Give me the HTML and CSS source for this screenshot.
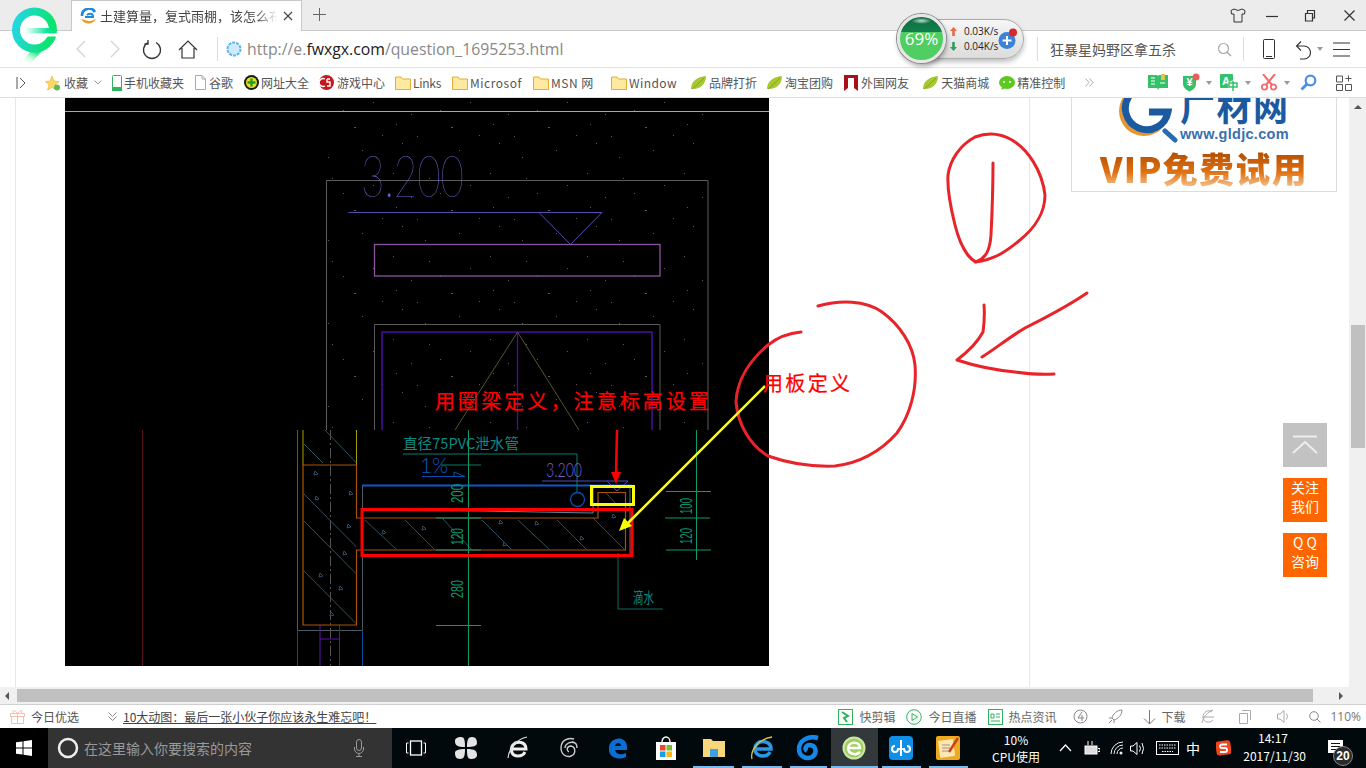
FILE: index.html
```html
<!DOCTYPE html>
<html lang="zh-CN">
<head>
<meta charset="utf-8">
<title>土建算量，复式雨棚，该怎么布置</title>
<link rel="stylesheet" href="styles.css">
</head>
<body>
<header class="tabstrip">
  <svg class="brand" width="50" height="64" viewBox="8 2 50 64">
    <defs>
      <linearGradient id="bg" x1="0" x2="1" y1="0" y2="0.2"><stop offset="0" stop-color="#25d6e6"/><stop offset="1" stop-color="#0be46e"/></linearGradient>
      <linearGradient id="bar" x1="0" x2="1"><stop offset="0" stop-color="#fff"/><stop offset="0.75" stop-color="#0be49a"/><stop offset="1" stop-color="#0be46e"/></linearGradient>
      <linearGradient id="tail" x1="0.8" x2="0.1" y1="0" y2="1"><stop offset="0" stop-color="#0be46e"/><stop offset="0.55" stop-color="#3fe88a"/><stop offset="1" stop-color="#fff" stop-opacity="0.2"/></linearGradient>
    </defs>
    <path d="M52 40 L32 62 L21 62 L34 48 Z" fill="url(#tail)"/>
    <path d="M17 43 Q24 50 31 51 L36 46 L22 38 Z" fill="#37c8f2"/>
    <circle cx="34.5" cy="30" r="18.5" fill="#fff" stroke="url(#bg)" stroke-width="8"/>
    <rect x="25" y="28" width="30" height="5.5" fill="url(#bar)"/>
    <rect x="46" y="33.500" width="12" height="3" fill="#fff"/>
  </svg>
  <div class="tab">
    <svg class="tab-fav" width="17" height="17" viewBox="0 0 17 17"><path d="M2 8 A7 7 0 0 1 15 4" fill="none" stroke="#1e88d8" stroke-width="2.600"/><path d="M5 9 H13 C13 5 9 5 7 7" fill="none" stroke="#1e88d8" stroke-width="2"/><path d="M1 11 C5 17 12 17 16 11 C12 13 8 14 5 12 Z" fill="#f39a1e"/></svg>
    <span class="tab-title">土建算量，复式雨棚，该怎么布置</span>
    <svg class="tab-x" width="10" height="10" viewBox="0 0 10 10"><path d="M1 1 L9 9 M9 1 L1 9" stroke="#444" stroke-width="1.200"/></svg>
  </div>
  <svg class="tab-plus" width="15" height="15" viewBox="0 0 15 15"><path d="M7.500 1 V14 M1 7.500 H14" stroke="#666" stroke-width="1"/></svg>
  <div class="winctrls">
    <svg width="16" height="15" viewBox="0 0 16 15"><path d="M4 1 L1 2.500 L1.500 6 L4 6 V14 H12 V6 L14.500 6 L15 2.500 L12 1 Q8 4 4 1 Z" fill="none" stroke="#333"/></svg>
    <svg width="14" height="15" viewBox="0 0 14 15"><path d="M1 8.500 H13" stroke="#333" stroke-width="1.200"/></svg>
    <svg width="12" height="15" viewBox="0 0 12 15"><path d="M1.500 5.500 H8.500 V13 H1.500 Z M3.500 5 V2.500 H10.500 V10 H9" fill="none" stroke="#333" stroke-width="1.200"/></svg>
    <svg width="13" height="15" viewBox="0 0 13 15"><path d="M1.500 2.500 L11.500 12.500 M11.500 2.500 L1.500 12.500" stroke="#333" stroke-width="1.200"/></svg>
  </div>
</header>

<nav class="addrbar">
  <svg class="nav-ico" width="12" height="18" viewBox="0 0 12 18"><path d="M10 1 L2 9 L10 17" fill="none" stroke="#d2d2d2" stroke-width="1.200"/></svg>
  <svg class="nav-ico fwd" width="12" height="18" viewBox="0 0 12 18"><path d="M2 1 L10 9 L2 17" fill="none" stroke="#d2d2d2" stroke-width="1.200"/></svg>
  <svg class="nav-ico reload" width="20" height="21" viewBox="0 0 20 21"><path d="M6 3.500 A8.500 8.500 0 1 0 14 3.500" fill="none" stroke="#333" stroke-width="1.300"/><path d="M6 1 V5 H2.500" fill="none" stroke="#333" stroke-width="1.300"/></svg>
  <svg class="nav-ico home" width="20" height="19" viewBox="0 0 20 19"><path d="M1 10 L10 1 L19 10 M4 8 V18 H16 V8" fill="none" stroke="#333" stroke-width="1.200"/></svg>
  <span class="vrule first"></span>
  <svg class="globe" width="16" height="16" viewBox="0 0 16 16"><circle cx="8" cy="8" r="6.500" fill="#cfeafc" stroke="#5fb5ee" stroke-width="2" stroke-dasharray="3 1"/></svg>
  <span class="url">http://e.<b>fwxgx.com</b>/question_1695253.html</span>
  <span class="vrule second"></span>
  <span class="hot">狂暴星妈野区拿五杀</span>
  <svg class="nav-ico lens" width="15" height="15" viewBox="0 0 15 15"><circle cx="6.500" cy="6.500" r="5" fill="none" stroke="#aaa" stroke-width="1.200"/><path d="M10 10 L14 14" stroke="#aaa" stroke-width="1.400"/></svg>
  <span class="vrule third"></span>
  <svg class="nav-ico phone" width="12" height="20" viewBox="0 0 12 20"><rect x="0.500" y="0.500" width="11" height="19" rx="1" fill="none" stroke="#333"/><path d="M3 17.500 H9" stroke="#333"/></svg>
  <svg class="nav-ico undo" width="16" height="21" viewBox="0 0 16 21"><path d="M2 7 H9 A6.500 6.500 0 0 1 9 20 H5 M6 2.500 L1.500 7 L6 11.500" fill="none" stroke="#333" stroke-width="1.100"/></svg>
  <span class="caret"></span>
  <svg class="nav-ico menu" width="17" height="15" viewBox="0 0 17 15"><path d="M0 1 H17 M0 7.500 H17 M0 14 H17" stroke="#333" stroke-width="1.200"/></svg>
</nav>

<aside class="speed">
  <div class="orb"><span class="orb-val">69%</span></div>
  <div class="pill">
    <div class="rates">
      <div class="rate"><svg width="7" height="9" viewBox="0 0 7 9"><path d="M3.500 0 L7 4 H4.800 V9 H2.200 V4 H0 Z" fill="#e8684a"/></svg><span>0.03K/s</span></div>
      <div class="rate"><svg width="7" height="9" viewBox="0 0 7 9"><path d="M3.500 9 L7 5 H4.800 V0 H2.200 V5 H0 Z" fill="#2f9e5a"/></svg><span>0.04K/s</span></div>
    </div>
    <div class="boost">
      <svg width="20" height="22" viewBox="0 0 20 22"><circle cx="9" cy="12.500" r="8.500" fill="#3b82d8"/><path d="M9 8 V17 M4.500 12.500 H13.500" stroke="#fff" stroke-width="2"/><circle cx="15" cy="4.500" r="4" fill="#d8282c"/></svg>
    </div>
  </div>
</aside>

<nav class="bookmarks">
  <svg class="bm-toggle" width="10" height="12" viewBox="0 0 10 12"><path d="M1 0 V12 M4 1 L9 6 L4 11" fill="none" stroke="#555"/></svg>
  <div class="bm bm-fav"><svg width="15" height="16" viewBox="0 0 15 16"><path d="M7 1 L9 6 L14 6.500 L10 10 L11.500 15 L7 12.500 L2.500 15 L4 10 L0.500 6.500 L5 6 Z" fill="#ffd75e" stroke="#e0b040" stroke-width="0.600"/><circle cx="12" cy="12.500" r="3" fill="#5dbb55"/></svg><span>收藏</span></div>
  <svg class="bm-chev" width="8" height="5" viewBox="0 0 8 5"><path d="M0.500 0.500 L4 4 L7.500 0.500" fill="none" stroke="#999"/></svg>
  <div class="bm m10 tight"><svg width="10" height="16" viewBox="0 0 10 16"><rect x="0.500" y="0.500" width="9" height="15" rx="1" fill="#fff" stroke="#2fb45f"/><rect x="0" y="12" width="10" height="4" fill="#2fb45f"/></svg><span>手机收藏夹</span></div>
  <div class="bm m11"><svg width="11" height="15" viewBox="0 0 11 15"><path d="M0.500 0.500 H7 L10.500 4 V14.500 H0.500 Z" fill="#fff" stroke="#aaa"/><path d="M7 .5 V4 H10.500" fill="none" stroke="#aaa"/></svg><span>谷歌</span></div>
  <div class="bm m11 tight"><svg width="15" height="15" viewBox="0 0 15 15"><circle cx="7.500" cy="7.500" r="7.500" fill="#1a1a1a"/><circle cx="7.500" cy="7.500" r="5.500" fill="#e4e21a"/><path d="M7.500 3.500 V11.500 M3.500 7.500 H11.500" stroke="#2a9a30" stroke-width="2.400"/></svg><span>网址大全</span></div>
  <div class="bm m10"><svg width="15" height="15" viewBox="0 0 15 15"><circle cx="7.500" cy="7.500" r="7.500" fill="#c8161d"/><path d="M6 4 A4 4 0 1 0 6 11 M8 4 H11 M8 4 V7 H11 V11 H8" fill="none" stroke="#fff" stroke-width="1.400"/></svg><span>游戏中心</span></div>
  <div class="bm m10 tight"><svg width="16" height="14" viewBox="0 0 16 14"><path d="M0.500 1 H6 L7.500 3 H15.500 V13.500 H0.500 Z" fill="#ffe9a0" stroke="#e0b030"/></svg><span class="w28">Links</span></div>
  <div class="bm m11 tight"><svg width="16" height="14" viewBox="0 0 16 14"><path d="M0.500 1 H6 L7.500 3 H15.500 V13.500 H0.500 Z" fill="#ffe9a0" stroke="#e0b030"/></svg><span class="w52">Microsof</span></div>
  <div class="bm m11 tight"><svg width="16" height="14" viewBox="0 0 16 14"><path d="M0.500 1 H6 L7.500 3 H15.500 V13.500 H0.500 Z" fill="#ffe9a0" stroke="#e0b030"/></svg><span class="w45">MSN 网</span></div>
  <div class="bm m15 tight"><svg width="16" height="14" viewBox="0 0 16 14"><path d="M0.500 1 H6 L7.500 3 H15.500 V13.500 H0.500 Z" fill="#ffe9a0" stroke="#e0b030"/></svg><span class="w48">Window</span></div>
  <div class="bm m14"><svg width="15" height="14" viewBox="0 0 15 14"><path d="M0 13 C0 5 6 1 15 0 C15 8 9 14 0 13 Z" fill="#a8c832"/><path d="M1 13 C5 10 9 6 13 2" fill="none" stroke="#7a9c1e" stroke-width="0.800"/></svg><span>品牌打折</span></div>
  <div class="bm m10"><svg width="15" height="14" viewBox="0 0 15 14"><path d="M0 13 C0 5 6 1 15 0 C15 8 9 14 0 13 Z" fill="#a8c832"/><path d="M1 13 C5 10 9 6 13 2" fill="none" stroke="#7a9c1e" stroke-width="0.800"/></svg><span>淘宝团购</span></div>
  <div class="bm m11"><svg width="14" height="16" viewBox="0 0 14 16"><path d="M0 0 H14 V16 L10 13 V3 H4 V13 L0 16 Z" fill="#a8101c"/></svg><span>外国网友</span></div>
  <div class="bm m14"><svg width="15" height="14" viewBox="0 0 15 14"><path d="M0 13 C0 5 6 1 15 0 C15 8 9 14 0 13 Z" fill="#a8c832"/><path d="M1 13 C5 10 9 6 13 2" fill="none" stroke="#7a9c1e" stroke-width="0.800"/></svg><span>天猫商城</span></div>
  <div class="bm m10 tight"><svg width="16" height="14" viewBox="0 0 16 14"><ellipse cx="8" cy="6.500" rx="8" ry="6.500" fill="#5fc820"/><path d="M3 11 L2.500 14 L6 12 Z" fill="#5fc820"/><circle cx="5" cy="6" r="1" fill="#fff"/><circle cx="11" cy="6" r="1" fill="#fff"/></svg><span>精准控制</span></div>
  <svg class="bm-more" width="9" height="9" viewBox="0 0 9 9"><path d="M0.500 0.500 L4 4.500 L0.500 8.500 M4.500 0.500 L8 4.500 L4.500 8.500" fill="none" stroke="#aaa"/></svg>
  <div class="bm-tools">
    <svg class="tool-book" width="20" height="17" viewBox="0 0 20 17"><path d="M0 1 H9 L10 2 L11 1 H20 V14 H11 L10 16 L9 14 H0 Z" fill="#35c16a"/><rect x="13" y="0" width="4" height="6" fill="#e3c34a"/><path d="M3 4 H7 M3 7 H7 M3 10 H7 M12 9 H17" stroke="#fff"/></svg>
    <svg class="tool-shield" width="20" height="19" viewBox="0 0 20 19"><path d="M1 3 H14 V11 Q14 16 7.500 18.500 Q1 16 1 11 Z" fill="#35c16a"/><text class="tool-yen" x="7.500" y="13" text-anchor="middle">¥</text><circle cx="14" cy="4" r="3.500" fill="#ee5a5a"/></svg>
    <span class="caret c4"></span>
    <svg class="tool-trans" width="20" height="19" viewBox="0 0 20 19"><rect x="0" y="1" width="13" height="14" rx="1" fill="#35c16a"/><text class="tool-a" x="2" y="12">A</text><circle cx="13" cy="12.500" r="5" fill="#fff"/><path d="M9 10 H17 V14 H9 Z M13 8 V18" fill="none" stroke="#35c16a" stroke-width="1.500"/></svg>
    <span class="caret c5"></span>
    <svg class="tool-cut" width="16" height="17" viewBox="0 0 16 17"><path d="M2 0 L11 11 M14 0 L5 11" stroke="#f46a6a" stroke-width="2"/><circle cx="3.500" cy="13" r="2.700" fill="none" stroke="#f46a6a" stroke-width="1.800"/><circle cx="12.500" cy="13" r="2.700" fill="none" stroke="#f46a6a" stroke-width="1.800"/></svg>
    <span class="caret c7"></span>
    <svg class="tool-key" width="17" height="17" viewBox="0 0 17 17"><circle cx="10.500" cy="6.500" r="4.800" fill="none" stroke="#4a8eea" stroke-width="2.200"/><path d="M7 10 L1.500 15.500" stroke="#4a8eea" stroke-width="2.800"/></svg>
    <svg class="tool-apps" width="16" height="16" viewBox="0 0 16 16"><path d="M0.500 1 H6.500 V7 H0.500 Z M0.500 9.500 H6.500 V15.500 H0.500 Z M9.500 9.500 H15.500 V15.500 H9.500 Z M12.500 .5 V6.500 M9.500 3.500 H15.500" fill="none" stroke="#555"/></svg>
  </div>
</nav>

<main class="content">
  <div class="gutter"></div>
  <section class="article">
    <svg class="cad" width="704" height="568" viewBox="65 98 704 568">
      <defs>
        <pattern id="dust" x="0" y="0" width="97" height="83" patternUnits="userSpaceOnUse">
          <path d="M5 7h1v1h-1z M23 31h1v1h-1z M41 12h1v1h-1z M63 44h2v1h-2z M82 19h1v1h-1z M14 60h1v1h-1z M37 74h1v1h-1z M71 67h1v1h-1z M91 52h1v1h-1z M52 27h1v1h-1z M8 41h1v1h-1z M29 53h1v1h-1z" fill="#5a5a5a"/>
        </pattern>
        <clipPath id="wallclip"><path d="M303 430 H356.500 V625 H303 Z"/></clipPath>
      </defs>
      <rect x="65" y="98" width="704" height="568" fill="#000"/>
      <rect x="326" y="98" width="382" height="332" fill="url(#dust)"/>
      <path d="M65 111.500 H769" stroke="#f0a200"/>

      <path d="M326.500 430 V180.500 H708 V430" fill="none" stroke="#5c5c5c"/>
      <text class="t-elev" x="361" y="197" textLength="103" lengthAdjust="spacingAndGlyphs">3.200</text>
      <path d="M348.500 212.500 H602 L570.500 244.500 L539 212.500" fill="none" stroke="#5a48b0" stroke-width="1"/>
      <rect x="374.500" y="244.500" width="285.500" height="31.500" fill="none" stroke="#8a559f" stroke-width="1.300"/>
      <path d="M374.500 430 V324.500 H660 V430" fill="none" stroke="#5a5a5a"/>
      <path d="M382 430 V332 H652 V430" fill="none" stroke="#4a0ca8" stroke-width="1.500"/>
      <path d="M517.500 332 V430" stroke="#4a0ca8" stroke-width="1.300"/>
      <path d="M455 430 L517.500 332 L579 430" fill="none" stroke="#4c5a2c"/>

      <rect x="66" y="430" width="703" height="236" fill="#000"/>
      <path d="M142.500 430 V666" stroke="#5a1020"/>
      <path d="M297.500 430 V630.500 H362.500 V486 M362.500 510 V630" fill="none" stroke="#4d5a60"/>
      <path d="M297.500 631 V666 M362.500 631 V666" stroke="#0a4a9a"/>
      <path d="M303 430 V465 M356.500 430 V465" stroke="#a8a000"/>
      <path d="M330.500 430 V666" stroke="#555" stroke-dasharray="10 3 2 3"/>
      <path d="M320 625 V666 M339.500 625 V666 M320 639 H339.500" fill="none" stroke="#5a12b0"/>
      <path d="M303 465 H356.500 V518 H598 V492.500 H625.500 V550 H356.500 V625 H303 Z" fill="none" stroke="#a8550c" stroke-width="1.200"/>
      <g stroke="#34505c" clip-path="url(#wallclip)">
        <path d="M325 430 L356.500 463 M303 443 L323 463 M303 493 L356.500 547 M303 520 L356.500 574 M303 570 L356.500 624"/>
      </g>
      <path d="M365 520 L397 550 M405 520 L435 550 M442 518 L472 550 M482 520 L512 550 M518 520 L550 550 M557 520 L587 550 M593 518 L625 550 M606 493 L618 506" stroke="#34505c"/>
      <path d="M315 471 l3 3 l-4 1 z M350 491 l3 3 l-4 1 z M316 496 l3 3 l-4 1 z M348 524 l3 3 l-4 1 z M344 551 l3 3 l-4 1 z M320 573 l3 3 l-4 1 z M340 586 l3 3 l-4 1 z M331 612 l3 3 l-4 1 z M383 530 l3 3 l-4 1 z M423 526 l3 3 l-4 1 z M500 520 l3 3 l-4 1 z M536 521 l3 3 l-4 1 z M504 542 l3 3 l-4 1 z M581 536 l3 3 l-4 1 z M613 514 l3 3 l-4 1 z" fill="none" stroke="#33506a"/>
      <path d="M362 485.500 H632" stroke="#0a5ac8" stroke-width="2"/>
      <path d="M390 510.500 L480 511 L593 513 V486" fill="none" stroke="#5a8a9a"/>
      <path d="M630 486 V555 H618" fill="none" stroke="#4a7a80"/>
      <text class="t-note" x="403" y="449" textLength="116" lengthAdjust="spacingAndGlyphs">直径75PVC泄水管</text>
      <path d="M403 454 H577 V492" fill="none" stroke="#0a7a70"/>
      <circle cx="577.500" cy="499.500" r="7" fill="none" stroke="#0a50b0" stroke-width="1.300"/>
      <text class="t-slope" x="420" y="473" textLength="28" lengthAdjust="spacingAndGlyphs">1%</text>
      <path d="M422 476.500 H465 L454 472 V476" fill="none" stroke="#0a50b0"/>
      <path d="M441 465 H481" stroke="#0a7a60"/>
      <text class="t-elev-sm" x="546" y="477" textLength="36" lengthAdjust="spacingAndGlyphs">3.200</text>
      <path d="M542 481 H628 L617 491 L607 481" fill="none" stroke="#5a4ab0"/>
      <path d="M468.500 430 V666 M436 625.500 H481 M436 518 H481 M436 550 H481" fill="none" stroke="#0a9a70"/>
      <path d="M696.500 430 V560 M666 491.500 H711 M665 518 H710 M666 550 H711" fill="none" stroke="#0a9a70"/>
      <text class="t-dim" transform="rotate(-90 463 503)" x="463" y="503" textLength="19" lengthAdjust="spacingAndGlyphs">200</text>
      <text class="t-dim" transform="rotate(-90 463 545)" x="463" y="545" textLength="17" lengthAdjust="spacingAndGlyphs">120</text>
      <text class="t-dim" transform="rotate(-90 463 598)" x="463" y="598" textLength="18" lengthAdjust="spacingAndGlyphs">280</text>
      <text class="t-dim" transform="rotate(-90 692 514)" x="692" y="514" textLength="16" lengthAdjust="spacingAndGlyphs">100</text>
      <text class="t-dim" transform="rotate(-90 692 544)" x="692" y="544" textLength="16" lengthAdjust="spacingAndGlyphs">120</text>
      <path d="M618 553 V609 H663" fill="none" stroke="#0a6a60"/>
      <text class="t-note" x="633" y="603" textLength="21" lengthAdjust="spacingAndGlyphs">滴水</text>
    </svg>
  </section>
  <aside class="side">
    <div class="ad">
      <div class="ad-logo">
        <svg width="62" height="60" viewBox="0 0 62 60"><circle cx="28" cy="25" r="25" fill="#e8952a"/><circle cx="31" cy="22" r="25" fill="#fff"/><path d="M47 8 A21.500 21.500 0 1 0 52 26 H33" fill="none" stroke="#1c5aa0" stroke-width="7"/><path d="M49 45 L59 54" stroke="#2a6ab0" stroke-width="5" stroke-linecap="round"/></svg>
        <div class="ad-name"><span class="ad-cn">广材网</span><span class="ad-url">www.gldjc.com</span></div>
      </div>
      <div class="ad-vip">VIP免费试用</div>
    </div>
  </aside>
  <div class="vscroll"><span class="vs-up"></span><span class="vs-thumb"></span></div>

  <svg class="ink" width="1349" height="589" viewBox="0 98 1349 589">
    <g fill="none" stroke="#e8232a" stroke-width="3" stroke-linecap="round" stroke-linejoin="round">
      <path d="M993 163 C993 190 992 215 991 235 C990 250 986 258 976 262 C968 258 960 245 955 225 C950 205 947 190 948 175 C950 160 960 145 975 137 C988 132 1000 133 1012 140 C1028 150 1042 170 1045 195 C1045 212 1035 228 1020 240 C1008 250 995 260 975 262"/>
      <path d="M818 306 C840 300 865 300 882 312 C900 325 913 345 915 365 C917 390 910 415 897 433 C880 452 860 463 835 466 C810 467 785 462 768 456 C750 445 738 425 736 402 C737 380 750 360 768 345 C778 337 790 333 801 332"/>
      <path d="M1087 293 C1065 308 1045 318 1025 328 C1008 338 995 349 982 357"/>
      <path d="M984 305 C985 318 984 325 983 332 C976 345 965 354 957 360 C975 366 995 370 1015 372 C1030 374 1042 375 1054 374"/>
    </g>
    <rect x="362" y="509.500" width="270" height="46" fill="none" stroke="#f00" stroke-width="3"/>
    <rect x="591.500" y="486.500" width="42" height="18" fill="none" stroke="#ff0" stroke-width="3"/>
    <path d="M617 430 L616 474" stroke="#f00" stroke-width="2.500"/>
    <path d="M611 472 L616 484 L621 472 Z" fill="#f00"/>
    <path d="M765 386 L626 525" stroke="#ff0" stroke-width="2.500"/>
    <path d="M619 531 L624 518 L632 526 Z" fill="#ff0"/>
    <text class="t-red" x="435" y="409" textLength="274">用圈梁定义，注意标高设置</text>
    <text class="t-red" x="763" y="391" textLength="87">用板定义</text>
  </svg>

  <div class="rail">
    <div class="rail-top"><svg width="26" height="20" viewBox="0 0 26 20"><path d="M1 1.500 H25 M1 18 L13 7 L25 18" fill="none" stroke="#eee" stroke-width="2"/></svg></div>
    <div class="rail-btn">关注<br>我们</div>
    <div class="rail-btn">Q Q<br>咨询</div>
  </div>
</main>

<div class="hscroll"><span class="hs-left"></span><span class="hs-thumb"></span><span class="hs-right"></span></div>

<footer class="status">
  <svg class="st-gift" width="15" height="15" viewBox="0 0 15 15"><path d="M0.500 4.500 H14.500 V7.500 H0.500 Z M1.500 7.500 V14.500 H13.500 V7.500 M7.500 4.500 V14.500 M7.500 4.500 C4 0 1 1 4 4.500 M7.500 4.500 C11 0 14 1 11 4.500" fill="none" stroke="#f5bfa5"/></svg>
  <span class="st-today">今日优选</span>
  <svg class="st-chev" width="9" height="10" viewBox="0 0 9 10"><path d="M.5 .5 L4.500 4.500 L8.500 .5 M.5 4.500 L4.500 8.500 L8.500 4.500" fill="none" stroke="#888"/></svg>
  <a class="st-news">10大动图：最后一张小伙子你应该永生难忘吧！</a>
  <div class="st-right">
    <svg width="15" height="16" viewBox="0 0 15 16"><rect x="0.500" y="0.500" width="14" height="15" fill="none" stroke="#2cb45c"/><path d="M4 3 L10 7 L6 9 L9 13" fill="none" stroke="#2cb45c" stroke-width="2"/></svg><span class="lab">快剪辑</span>
    <svg class="sp1" width="16" height="16" viewBox="0 0 16 16"><circle cx="8" cy="8" r="7.300" fill="none" stroke="#2cb45c"/><path d="M6 4.500 L11.500 8 L6 11.500 Z" fill="none" stroke="#2cb45c"/></svg><span class="lab">今日直播</span>
    <svg class="sp2" width="15" height="16" viewBox="0 0 15 16"><rect x="0.500" y="0.500" width="14" height="15" fill="none" stroke="#2cb45c"/><path d="M3 5 H6 V9 H3 Z M8 5 H12 M8 8 H12 M3 12 H12" fill="none" stroke="#2cb45c"/></svg><span class="lab lab-hot">热点资讯</span>
    <svg class="sp3" width="15" height="15" viewBox="0 0 15 15"><circle cx="7.500" cy="7.500" r="6.500" fill="none" stroke="#888"/><path d="M9 3 L5 9 H11 M9 6 V12" fill="none" stroke="#888"/></svg>
    <svg class="sp4" width="15" height="15" viewBox="0 0 15 15"><path d="M14 1 C9 1 5 5 4 9 L6 11 C10 10 14 6 14 1 Z M4 9 L1 9 M6 11 V14 M1 14 L4 11" fill="none" stroke="#888"/></svg>
    <svg class="sp5" width="13" height="16" viewBox="0 0 13 16"><path d="M6.500 1 V15 M1 9.500 L6.500 15 L12 9.500" fill="none" stroke="#777"/></svg><span class="lab lab-dl">下载</span>
    <svg class="sp6" width="14" height="15" viewBox="0 0 14 15"><path d="M13 8 H2 C2 3 7 0 11 3 M2 8 C2 13 8 15 12 11 M12 1 C6 3 2 9 1 14" fill="none" stroke="#aaa"/></svg>
    <svg class="sp7" width="12" height="14" viewBox="0 0 12 14"><path d="M.5 3.500 H8.500 V13.500 H.5 Z M3 .5 H11.500 V10" fill="none" stroke="#aaa"/></svg>
    <svg class="sp8" width="13" height="15" viewBox="0 0 13 15"><path d="M.5 5 H3 L7 1.500 V13.500 L3 10 H.5 Z M9.500 4.500 Q11.500 7.500 9.500 10.500" fill="none" stroke="#aaa"/></svg>
    <svg class="sp9" width="12" height="12" viewBox="0 0 12 12"><circle cx="5" cy="5" r="4.300" fill="none" stroke="#888"/><path d="M8 8 L11.500 11.500" stroke="#888"/></svg>
    <span class="lab lab-zoom">110%</span>
  </div>
</footer>

<footer class="taskbar">
  <div class="start"><svg width="16" height="16" viewBox="0 0 16 16"><path d="M0 2.300 L6.500 1.400 V7.500 H0 Z M7.500 1.200 L16 0 V7.500 H7.500 Z M0 8.500 H6.500 V14.600 L0 13.700 Z M7.500 8.500 H16 V16 L7.500 14.800 Z" fill="#fff"/></svg></div>
  <div class="search">
    <svg width="22" height="22" viewBox="0 0 22 22"><circle cx="11" cy="11" r="9" fill="none" stroke="#eee" stroke-width="2.500"/></svg>
    <span class="search-txt">在这里输入你要搜索的内容</span>
    <svg class="mic" width="10" height="18" viewBox="0 0 10 18"><rect x="2.500" y="0.500" width="5" height="11" rx="2.500" fill="none" stroke="#999"/><path d="M.5 8 V10 A4.500 4.500 0 0 0 9.500 10 V8 M5 14.500 V17.500 M2 17.500 H8" fill="none" stroke="#999"/></svg>
  </div>
  <div class="apps">
    <div class="app"><svg width="20" height="16" viewBox="0 0 20 16"><rect x="4.500" y="1" width="11" height="14" fill="none" stroke="#fff" stroke-width="1.300"/><path d="M2.500 3 H.5 V13 H2.500 M17.500 3 H19.500 V13 H17.500" fill="none" stroke="#fff"/></svg></div>
    <div class="app"><svg width="22" height="22" viewBox="0 0 22 22"><path d="M10 10 C2 10 0 8 0 4 C0 1 3 0 6 0 C10 0 10 5 10 10 Z M12 10 C12 3 13 0 17 0 C21 0 22 3 22 6 C22 9 18 10 12 10 Z M12 12 C20 12 22 14 22 18 C22 21 19 22 16 22 C12 22 12 17 12 12 Z M10 12 C10 19 9 22 5 22 C1 22 0 19 0 16 C0 13 4 12 10 12 Z" fill="#e4e4e4"/></svg></div>
    <div class="app"><svg width="22" height="24" viewBox="0 0 22 24"><path d="M4 13 H19 C19 6 10 4 6 9 C3 13 4 20 11 20 C15 20 17 18 18 16" fill="none" stroke="#eee" stroke-width="3"/><path d="M1 22 C2 12 10 3 20 1" fill="none" stroke="#ddd" stroke-width="1.200"/></svg></div>
    <div class="app"><svg width="20" height="22" viewBox="0 0 20 22"><path d="M15 2 C8 0 2 4 2 11 C2 17 7 21 12 19 C17 17 17 10 12 9 C8 9 7 13 10 15 M16 6 C11 4 6 7 6 11 M18 11 C18 6 16 5 13 5" fill="none" stroke="#ccc" stroke-width="1.400"/></svg></div>
    <div class="app"><svg width="22" height="24" viewBox="0 0 22 24"><path d="M2 12 C2 2 18 -2 20 10 V14 H8 C9 19 15 19 19 17 V21 C10 25 1 21 2 12 Z M8 10 H14 C14 6 9 6 8 10 Z" fill="#0a6fd4" fill-rule="evenodd"/></svg></div>
    <div class="app"><svg width="22" height="26" viewBox="0 0 22 26"><path d="M1 7 H21 V25 H1 Z" fill="#fff"/><path d="M7 7 A4 5 0 0 1 15 7" fill="none" stroke="#fff" stroke-width="1.400"/><rect x="5" y="10" width="5.500" height="5.500" fill="#e8492c"/><rect x="11.500" y="10" width="5.500" height="5.500" fill="#7fbb2c"/><rect x="5" y="16.500" width="5.500" height="5.500" fill="#12a3e8"/><rect x="11.500" y="16.500" width="5.500" height="5.500" fill="#fbb614"/></svg></div>
    <div class="app run"><svg width="22" height="20" viewBox="0 0 22 20"><path d="M0 1 H8 L10 3 H22 V19 H0 Z" fill="#f7d67c"/><rect x="7" y="11" width="8" height="8" fill="#3ca2e0"/></svg></div>
    <div class="app run"><svg width="24" height="24" viewBox="0 0 24 24"><path d="M5 13 H21 C21 5 10 3 6 9 C3 14 6 20 13 20 C17 20 19 18 20 16" fill="none" stroke="#2a98e6" stroke-width="3.500"/><path d="M2 23 C0 15 8 3 22 1" fill="none" stroke="#e8c23a" stroke-width="1.300"/></svg></div>
    <div class="app run"><svg width="24" height="26" viewBox="0 0 24 26"><path d="M22 3 C12 0 3 6 3 14 C3 21 10 25 16 22 C21 19 21 11 14 10 C10 10 8 14 11 16" fill="none" stroke="#1487e8" stroke-width="4.500"/></svg></div>
    <div class="app active run"><svg width="24" height="28" viewBox="0 0 24 28"><circle cx="12" cy="14" r="10.500" fill="#9ed060" stroke="#cde8a8" stroke-width="2"/><path d="M6 14 H18 C18 7 7 7 6 14 C6 20 14 22 18 18" fill="none" stroke="#fff" stroke-width="2.500"/></svg></div>
    <div class="app run"><svg width="24" height="24" viewBox="0 0 24 24"><rect width="24" height="24" rx="4" fill="#0f8fe8"/><path d="M12 4 V20 M6 10 A3 3 0 1 0 9 13 H15 A3 3 0 1 0 18 10" fill="none" stroke="#fff" stroke-width="2"/></svg></div>
    <div class="app run"><svg width="24" height="24" viewBox="0 0 24 24"><rect width="24" height="24" rx="2" fill="#f0a81e"/><rect x="3" y="4" width="15" height="17" fill="#fbe8b0" transform="rotate(-8 10 12)"/><path d="M6 9 H14 M6 12 H14 M6 15 H12" stroke="#a88" stroke-width="1"/><path d="M22 2 L13 16" stroke="#c8401e" stroke-width="2.500"/></svg></div>
  </div>
  <div class="cpu"><span>10%</span><span>CPU使用</span></div>
  <div class="tray">
    <svg class="tr-up" width="13" height="8" viewBox="0 0 13 8"><path d="M1 7 L6.500 1 L12 7" fill="none" stroke="#fff" stroke-width="1.200"/></svg>
    <svg class="tr-bat" width="16" height="15" viewBox="0 0 16 15"><rect x="1" y="5" width="12" height="8" fill="#ddd" stroke="#fff"/><path d="M14 7.500 H16 V10.500 H14 M4 0 V4 M8 0 V4" fill="none" stroke="#fff"/></svg>
    <svg class="tr-wifi" width="14" height="14" viewBox="0 0 14 14"><path d="M1 13 A12 12 0 0 1 13 1 M4 13 A9 9 0 0 1 13 4 M7 13 A6 6 0 0 1 13 7" fill="none" stroke="#eee"/><circle cx="11" cy="12" r="1.500" fill="#eee"/></svg>
    <svg class="tr-vol" width="15" height="15" viewBox="0 0 15 15"><path d="M.5 5 H3 L7 1.500 V13.500 L3 10 H.5 Z M9.500 4.500 Q11.500 7.500 9.500 10.500 M12 2 Q15 7.500 12 13" fill="none" stroke="#fff"/></svg>
    <svg class="tr-kb" width="23" height="14" viewBox="0 0 23 14"><rect x="0.500" y="0.500" width="22" height="13" fill="none" stroke="#fff"/><path d="M3 4 H20 M3 7 H20 M6 10.500 H17" stroke="#fff" stroke-dasharray="1.500 1"/></svg>
    <span class="tr-ime">中</span>
    <svg class="tr-sg" width="15" height="16" viewBox="0 0 15 16"><rect x="0" y="1" width="15" height="14" rx="3" fill="#f0461e" transform="rotate(-8 7 8)"/><path d="M11 4.500 H6 Q4 4.500 4 6.500 Q4 8 6 8 H9 Q11 8 11 10 Q11 12 9 12 H4" fill="none" stroke="#fff" stroke-width="1.800"/></svg>
  </div>
  <div class="clock"><span>14:17</span><span>2017/11/30</span></div>
  <div class="notify">
    <svg width="15" height="15" viewBox="0 0 15 15"><path d="M0 0 H15 V13 H0 Z" fill="#fff"/><path d="M3 3.500 H12 M3 6.500 H12 M3 9.500 H9" stroke="#111"/></svg>
    <span class="badge">20</span>
  </div>
</footer>
</body>
</html>
```
FILE: styles.css
```css
* { box-sizing: border-box; }
html, body { margin: 0; padding: 0; }
body {
  width: 1366px; height: 768px; overflow: hidden; display: flex; flex-direction: column;
  background: #fff; color: #555;
  font-family: "Noto Sans CJK SC", "Liberation Sans", sans-serif; font-size: 12px; position: relative;
}
svg { display: block; flex: none; }

/* tab strip */
.tabstrip { height: 31px; background: #ececec; border-bottom: 1px solid #c9c9c9; display: flex; align-items: flex-end; padding-left: 71px; position: relative; flex: none; }
.brand { position: absolute; left: 8px; top: 2px; z-index: 3; }
.tab { width: 231px; height: 31px; margin-bottom: -1px; background: #fff; border: 1px solid #c9c9c9; border-bottom: 0; display: flex; align-items: center; padding-left: 8px; }
.tab-title { width: 177px; margin-left: 3px; overflow: hidden; white-space: nowrap; font-size: 13px; color: #444; line-height: 18px; -webkit-mask-image: linear-gradient(90deg, #000 88%, transparent); mask-image: linear-gradient(90deg, #000 88%, transparent); }
.tab-x { margin-left: 6px; }
.tab-plus { margin: 0 0 8px 10px; }
.winctrls { margin-left: auto; display: flex; align-items: center; align-self: stretch; padding-right: 10px; }
.winctrls svg:nth-child(1) { margin-right: 19px; }
.winctrls svg:nth-child(2) { margin-right: 25px; }
.winctrls svg:nth-child(3) { margin-right: 27px; }

/* address bar */
.addrbar { height: 37px; flex: none; background: #fff; border-bottom: 1px solid #e2e2e2; display: flex; align-items: center; padding-left: 75px; }
.nav-ico.fwd { margin-left: 22px; }
.nav-ico.reload { margin-left: 21px; }
.nav-ico.home { margin-left: 16px; }
.vrule { width: 1px; height: 24px; background: #ddd; flex: none; }
.vrule.first { margin-left: 19px; }
.globe { margin-left: 8px; }
.url { margin-left: 5px; width: 320px; font: 15.800px/20px "Open Sans", sans-serif; color: #888; white-space: nowrap; }
.url b { font-weight: 400; color: #222; }
.vrule.second { margin-left: 470px; }
.hot { margin-left: 12px; width: 126px; font-size: 14px; color: #555; white-space: nowrap; line-height: 20px; }
.lens { margin-left: 41px; }
.vrule.third { margin-left: 11px; }
.phone { margin-left: 19px; }
.undo { margin-left: 20px; }
.caret { width: 0; height: 0; border: 3.500px solid transparent; border-top: 4px solid #999; border-bottom: 0; flex: none; }
.addrbar .caret { margin-left: 6px; }
.menu { margin-left: 10px; }

/* speed widget */
.speed { position: absolute; left: 897px; top: 14px; display: flex; align-items: center; z-index: 4; }
.orb { width: 49px; height: 49px; border-radius: 50%; border: 3px solid #e6e6e6; background: radial-gradient(ellipse 10px 3px at 50% 9%, rgba(255,255,255,.75), transparent), linear-gradient(#0c6e40, #12804c 35%, #4fce62 35%); box-shadow: 0 0 0 1px #8a8a8a, 1px 3px 5px rgba(0,0,0,.35); display: flex; align-items: center; justify-content: center; position: relative; z-index: 1; flex: none; }
.orb-val { color: #fff; font: 400 17px/20px "Open Sans", sans-serif; }
.pill { margin-left: -24px; width: 102px; height: 40px; padding: 0 7px 0 27px; border-radius: 0 20px 20px 0; background: linear-gradient(#f6f6f6, #dcdcdc); border: 1px solid #aaa; box-shadow: 0 3px 5px rgba(0,0,0,.25); display: flex; align-items: center; justify-content: space-between; }
.rates { display: flex; flex-direction: column; gap: 3px; }
.rate { display: flex; align-items: center; gap: 7px; font: 400 10px/12px "Open Sans", sans-serif; color: #222; white-space: nowrap; }

/* bookmarks */
.bookmarks { height: 30px; flex: none; background: #fff; border-bottom: 1px solid #ddd; display: flex; align-items: center; padding-left: 16px; }
.bm { display: flex; align-items: center; gap: 3px; white-space: nowrap; color: #555; line-height: 16px; }
.bm span { font-size: 12px; }
.bm.tight { gap: 2px; }
.m10 { margin-left: 10px; }
.m11 { margin-left: 11px; }
.m14 { margin-left: 14px; }
.m15 { margin-left: 15px; }
.w28 { width: 28px; letter-spacing: -0.300px; }
.w52 { width: 52px; letter-spacing: 0.500px; }
.w45 { width: 45px; letter-spacing: 0.500px; }
.w48 { width: 48px; letter-spacing: 0.400px; }
.bm-toggle { margin-right: 19px; }
.bm-fav { gap: 4px; }
.bm-chev { margin-left: 6px; }
.bm-more { margin-left: 20px; }
.bm-tools { margin-left: auto; display: flex; align-items: center; padding-right: 14px; }
.tool-shield { margin-left: 14px; }
.bm-tools .c4 { margin-left: 4px; }
.tool-trans { margin-left: 8px; }
.bm-tools .c5 { margin-left: 5px; }
.tool-cut { margin-left: 10px; }
.bm-tools .c7 { margin-left: 7px; }
.tool-key { margin-left: 10px; }
.tool-apps { margin-left: 19px; }
.tool-yen { fill: #fff; font: 700 11px "Liberation Sans", sans-serif; }
.tool-a { fill: #fff; font: 700 11px "Liberation Sans", sans-serif; }

/* page */
.content { flex: 1; min-height: 0; display: flex; position: relative; overflow: hidden; background: #fff; }
.gutter { width: 16px; border-right: 1px solid #e6e6e6; flex: none; }
.article { width: 1014px; flex: none; border-right: 1px solid #e6e6e6; padding-left: 49px; }
.side { flex: 1; padding-left: 41px; }
.ad { width: 266px; height: 94px; border: 1px solid #dcdcdc; border-top: 0; overflow: hidden; display: flex; flex-direction: column; align-items: center; }
.ad-logo { display: flex; align-items: flex-start; margin-top: -12px; height: 62px; flex: none; }
.ad-name { display: flex; flex-direction: column; width: 112px; margin-left: 2px; }
.ad-cn { font-size: 35px; line-height: 38px; font-weight: 700; letter-spacing: 1.500px; color: #1c5aa0; margin-top: 1px; white-space: nowrap; }
.ad-url { font: 700 14.500px/16px "Liberation Sans", sans-serif; color: #3a6fb0; letter-spacing: 0.300px; margin-top: 1px; white-space: nowrap; }
.ad-vip { font-size: 35px; line-height: 40px; font-weight: 900; white-space: nowrap; letter-spacing: 1.300px; margin-top: 0; flex: none; background: linear-gradient(#a84800, #e07010 60%, #f5c898); -webkit-background-clip: text; background-clip: text; color: transparent; }
.vscroll { width: 17px; flex: none; background: #f0f0f0; position: relative; display: flex; flex-direction: column; align-items: center; padding-top: 7px; }
.vs-up { width: 0; height: 0; border: 4px solid transparent; border-bottom: 4px solid #555; border-top: 0; }
.vs-thumb { width: 14px; height: 123px; background: #c0c0c0; margin-top: 216px; }

.ink { position: absolute; left: 0; top: 0; }
.rail { position: absolute; left: 1283px; top: 325px; width: 44px; display: flex; flex-direction: column; gap: 11px; }
.rail-top { height: 44px; background: #c2c2c2; display: flex; align-items: center; justify-content: center; }
.rail-btn { height: 44px; background: #ff6600; color: #fff; font-size: 14px; line-height: 19px; text-align: center; padding-top: 0; }

/* cad text */
.t-elev { fill: #7060d0; font: 100 58px "Lato", sans-serif; }
.t-elev-sm { fill: #7260d0; font: 300 20px "Lato", sans-serif; }
.t-note { fill: #0a8a80; font: 400 15px "Noto Sans CJK SC", sans-serif; }
.t-slope { fill: #0a5ac0; font: 300 22px "Lato", sans-serif; }
.t-dim { fill: #0a9a70; font: 400 17px "Liberation Sans", sans-serif; }
.t-red { fill: #f00; stroke: #f00; stroke-width: 0.250px; font: 400 20px "Noto Sans CJK SC", sans-serif; }

/* scrollbars */
.hscroll { height: 17px; flex: none; background: #f0f0f0; display: flex; align-items: center; padding: 0 0 0 5px; }
.hs-left { width: 0; height: 0; border: 4px solid transparent; border-right: 4px solid #555; border-left: 0; }
.hs-thumb { width: 1296px; height: 13px; background: #c0c0c0; margin-left: 8px; }
.hs-right { width: 0; height: 0; border: 4px solid transparent; border-left: 4px solid #555; border-right: 0; margin-left: 26px; }

/* status bar */
.status { height: 24px; flex: none; background: #fff; border-top: 1px solid #cfcfcf; display: flex; align-items: center; padding-left: 10px; }
.st-today { margin-left: 6px; color: #555; }
.st-chev { margin-left: 29px; }
.st-news { margin-left: 6px; color: #444; text-decoration: underline; white-space: nowrap; width: 254px; line-height: 17px; }
.st-right { margin-left: auto; display: flex; align-items: center; padding-right: 5px; }
.lab { margin-left: 6px; color: #666; white-space: nowrap; }
.lab-hot { margin-left: 5px; }
.sp1 { margin-left: 11px; }
.sp2 { margin-left: 12px; }
.sp3 { margin-left: 17px; }
.sp4 { margin-left: 20px; }
.sp5 { margin-left: 20px; }
.lab-dl { margin-left: 5px; }
.sp6 { margin-left: 16px; }
.sp7 { margin-left: 24px; }
.sp8 { margin-left: 26px; }
.sp9 { margin-left: 19px; }
.lab-zoom { margin-left: 9px; font-family: "Open Sans", sans-serif; color: #777; }

/* taskbar */
.taskbar { height: 40px; flex: none; background: #02090c; display: flex; color: #fff; }
.start { width: 48px; flex: none; background: #000; display: flex; align-items: center; justify-content: center; }
.search { width: 344px; flex: none; background: #333; display: flex; align-items: center; padding-left: 9px; }
.search-txt { margin-left: 5px; width: 268px; color: #999; font-size: 14px; white-space: nowrap; }
.mic { margin-left: 2px; }
.apps { display: grid; grid-template-columns: 48.500px 51.500px 51px 51px 48.500px 46.500px 49px 47.500px 45.500px 46.500px 47px 47.500px; width: 580px; flex: none; }
.app { display: flex; align-items: center; justify-content: center; position: relative; height: 40px; }
.app.active { background: #33393b; }
.app.run::after { content: ""; position: absolute; left: 4px; right: 4px; bottom: 0; height: 2px; background: #76b9ed; }
.app.active.run::after { left: 0; right: 0; }
.cpu { width: 48px; margin-left: 20px; flex: none; display: flex; flex-direction: column; align-items: center; font-size: 12px; line-height: 17px; padding-top: 3px; white-space: nowrap; }
.tray { display: flex; align-items: center; margin-left: 19px; flex: none; }
.tr-bat { margin-left: 12px; }
.tr-wifi { margin-left: 10px; }
.tr-vol { margin-left: 6px; }
.tr-kb { margin-left: 11px; }
.tr-ime { margin-left: 7px; font-size: 14px; }
.tr-sg { margin-left: 16px; }
.clock { margin-left: 7px; width: 68px; flex: none; display: flex; flex-direction: column; align-items: flex-end; line-height: 18px; font-size: 12px; padding-top: 1px; white-space: nowrap; }
.clock span:first-child { margin-right: 18px; }
.notify { margin-left: 22px; width: 30px; position: relative; padding-top: 12px; }
.badge { position: absolute; left: 5px; top: 18px; width: 20px; height: 20px; border-radius: 50%; background: #2a2a2a; border: 1px solid #888; font: 700 12px/18px "Liberation Sans", sans-serif; color: #fff; text-align: center; }
```
